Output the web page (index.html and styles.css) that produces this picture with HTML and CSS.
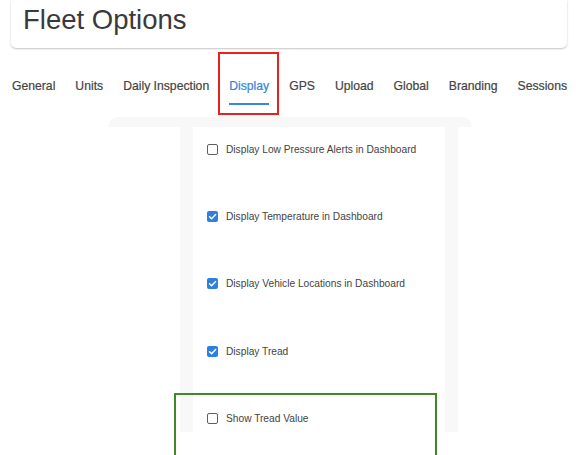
FILE: index.html
```html
<!DOCTYPE html>
<html lang="en">
<head>
<meta charset="utf-8">
<title>Fleet Options</title>
<link rel="stylesheet" href="styles.css">
</head>
<body>
<div class="page">
  <header class="title-card">
    <h1>Fleet Options</h1>
  </header>

  <nav class="tabs">
    <a class="tab">General</a>
    <a class="tab">Units</a>
    <a class="tab">Daily Inspection</a>
    <a class="tab active">Display</a>
    <a class="tab">GPS</a>
    <a class="tab">Upload</a>
    <a class="tab">Global</a>
    <a class="tab">Branding</a>
    <a class="tab">Sessions</a>
  </nav>

  <section class="panel">
    <div class="panel-top"></div>
    <div class="panel-body">
      <div class="column">
        <ul class="options">
          <li class="option">
            <span class="box"></span>
            <span class="label">Display Low Pressure Alerts in Dashboard</span>
          </li>
          <li class="option">
            <span class="box checked"><svg viewBox="0 0 12 12"><polyline points="2.8,6.2 5,8.4 9.4,3.8"/></svg></span>
            <span class="label">Display Temperature in Dashboard</span>
          </li>
          <li class="option">
            <span class="box checked"><svg viewBox="0 0 12 12"><polyline points="2.8,6.2 5,8.4 9.4,3.8"/></svg></span>
            <span class="label">Display Vehicle Locations in Dashboard</span>
          </li>
          <li class="option">
            <span class="box checked"><svg viewBox="0 0 12 12"><polyline points="2.8,6.2 5,8.4 9.4,3.8"/></svg></span>
            <span class="label">Display Tread</span>
          </li>
          <li class="option highlight">
            <span class="box"></span>
            <span class="label">Show Tread Value</span>
          </li>
        </ul>
      </div>
    </div>
  </section>
</div>
</body>
</html>
```

FILE: styles.css
```css
*,
*::before,
*::after {
  box-sizing: border-box;
}

html, body {
  margin: 0;
  background: #ffffff;
  overflow: hidden;
}

body {
  font-family: "Liberation Sans", Arial, Helvetica, sans-serif;
  color: #3a3a3a;
}

.page {
  padding: 0 10px 0 11px;
  height: 455px;
  overflow: hidden;
}

/* Header card */
.title-card {
  height: 48px;
  padding: 4px 12px 0;
  background: #ffffff;
  border-radius: 0 0 5px 5px;
  box-shadow: 0 1px 2px rgba(0, 0, 0, 0.22), 0 0 1px rgba(0, 0, 0, 0.08);
}

.title-card h1 {
  margin: 0;
  font-size: 27.5px;
  font-weight: 400;
  line-height: 31px;
  color: #3a3a3a;
}

/* Tab bar */
.tabs {
  display: flex;
  margin: 30px 0 0 -9px;
}

.tab {
  position: relative;
  padding: 0 10px 9px;
  border-bottom: 2px solid transparent;
  font-size: 12.2px;
  line-height: 16px;
  color: #444444;
  -webkit-text-stroke: 0.2px currentColor;
  white-space: nowrap;
}

.tab.active {
  color: #3884d8;
}

.tab.active::after {
  content: "";
  position: absolute;
  left: 10px;
  right: 10px;
  bottom: -2px;
  height: 2px;
  background: #3a86dc;
}

/* Red callout around the active tab */
.tab.active::before {
  content: "";
  position: absolute;
  top: -26px;
  left: -1px;
  width: 61px;
  height: 63px;
  border: 2.5px solid #e8231b;
}

/* Settings panel */
.panel {
  margin: 12px 0 0 97px;
  width: 364px;
}

.panel-top {
  height: 10px;
  background: #f8f8f8;
  border-radius: 16px 16px 0 0;
}

.panel-body {
  padding: 0 14px 0 72px;
}

.column {
  padding: 0 13px;
  background: #f8f8f8;
}

.options {
  list-style: none;
  margin: 0;
  padding: 12px 0 0 14px;
  height: 305px;
  background: #ffffff;
  display: flex;
  flex-direction: column;
  gap: 47.4px;
}

.option {
  position: relative;
  display: flex;
  align-items: center;
  gap: 8px;
  height: 20px;
}

.box {
  flex: none;
  width: 11px;
  height: 11px;
  border: 1.2px solid #5f5f5f;
  border-radius: 2px;
  background: #ffffff;
}

.box.checked {
  border: none;
  background: #2f7fdc;
  display: flex;
}

.box svg {
  width: 11px;
  height: 11px;
  fill: none;
  stroke: #ffffff;
  stroke-width: 1.6;
  stroke-linecap: round;
  stroke-linejoin: round;
}

.label {
  font-size: 10.2px;
  color: #444444;
  white-space: nowrap;
}

/* Green callout around the last option, running off the bottom edge */
.option.highlight::after {
  content: "";
  position: absolute;
  top: -16px;
  left: -33px;
  width: 263px;
  height: 63px;
  border: 2px solid #3e8a27;
  border-bottom: none;
}
```
